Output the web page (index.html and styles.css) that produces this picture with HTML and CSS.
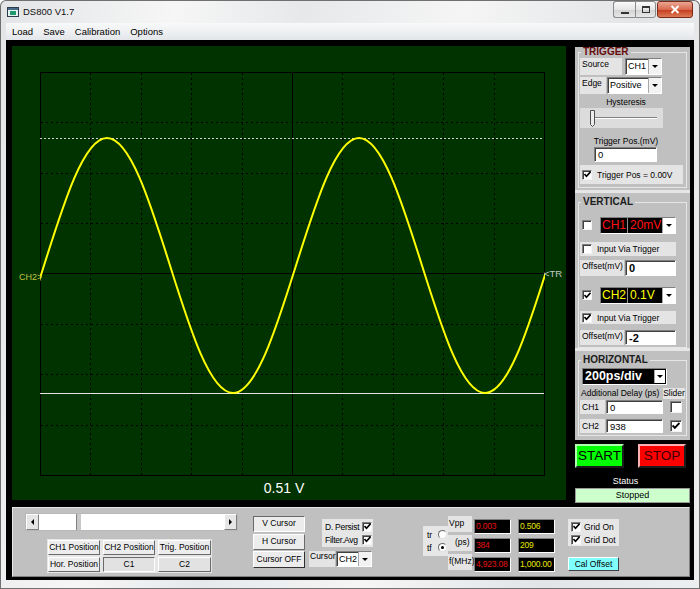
FILE: index.html
```html
<!DOCTYPE html>
<html>
<head>
    <title>DS800 V1.7</title>
    <link rel="stylesheet" href="styles.css">
</head>
<body>
    <div class="window">
        <div class="titlebar">
            <svg class="app-icon" width="12" height="12" viewBox="0 0 12 12">
                <rect x="0.5" y="1.5" width="11" height="9" fill="#e6f2f2" stroke="#2d3d4d"/>
                <rect x="1" y="2" width="10" height="2" fill="#4a6a8a"/>
                <rect x="3" y="5" width="6" height="4" fill="#1f9a6a"/>
            </svg>
            <span class="title">DS800 V1.7</span>
            <div class="caption-buttons">
                <div class="cbtn cbtn-min"><span class="min-bar"></span></div>
                <div class="cbtn cbtn-max"><span class="max-box"></span></div>
                <div class="cbtn cbtn-close">
                    <svg width="10" height="9" viewBox="0 0 10 9"><path d="M1.5 1 L8.5 8 M8.5 1 L1.5 8" stroke="#fff" stroke-width="2"/></svg>
                </div>
            </div>
        </div>

        <div class="menubar">
            <span>Load</span>
            <span>Save</span>
            <span>Calibration</span>
            <span>Options</span>
        </div>

        <div class="client">
            <div class="main">
                <div class="scope">
                    <svg width="554" height="454" viewBox="0 0 554 454">
                        <defs>
                            <clipPath id="plot"><rect x="28" y="0" width="505" height="454"/></clipPath>
                        </defs>
                        <rect width="554" height="454" fill="#003300"/>
                        <g stroke="#000" fill="none">
                            <rect x="28.5" y="26.5" width="504" height="403"/>
                            <line x1="280.5" y1="26" x2="280.5" y2="430"/>
                            <line x1="28" y1="227.5" x2="532" y2="227.5"/>
                        </g>
                        <g stroke="#000" stroke-dasharray="2 3" fill="none">
                            <line x1="78.5" y1="27" x2="78.5" y2="429"/>
                            <line x1="129.5" y1="27" x2="129.5" y2="429"/>
                            <line x1="179.5" y1="27" x2="179.5" y2="429"/>
                            <line x1="230.5" y1="27" x2="230.5" y2="429"/>
                            <line x1="330.5" y1="27" x2="330.5" y2="429"/>
                            <line x1="381.5" y1="27" x2="381.5" y2="429"/>
                            <line x1="431.5" y1="27" x2="431.5" y2="429"/>
                            <line x1="482.5" y1="27" x2="482.5" y2="429"/>
                            <line x1="29" y1="76.5" x2="532" y2="76.5"/>
                            <line x1="29" y1="127.5" x2="532" y2="127.5"/>
                            <line x1="29" y1="177.5" x2="532" y2="177.5"/>
                            <line x1="29" y1="278.5" x2="532" y2="278.5"/>
                            <line x1="29" y1="328.5" x2="532" y2="328.5"/>
                            <line x1="29" y1="379.5" x2="532" y2="379.5"/>
                        </g>
                        <line x1="28" y1="92.5" x2="532" y2="92.5" stroke="#d0d0d0" stroke-dasharray="2 2"/>
                        <line x1="28" y1="347.5" x2="532" y2="347.5" stroke="#e4e4e4"/>
                        <path clip-path="url(#plot)" fill="none" stroke="#ffff00" stroke-width="2"
                              d="M-31 347 C14.9 347 49.1 92 95 92 C140.9 92 175.1 347 221 347 C266.9 347 301.1 92 347 92 C392.9 92 427.1 347 473 347 C518.9 347 553.1 92 599 92"/>
                        <text class="mark-ch2" x="7" y="234">CH2&gt;</text>
                        <text class="mark-tr" x="532" y="231">&lt;TR</text>
                        <text class="readout" x="272" y="447" text-anchor="middle">0.51 V</text>
                    </svg>
                </div>

                <div class="side">
                    <div class="frame frame-trigger">
                        <fieldset class="group">
                            <legend class="legend-trigger">TRIGGER</legend>
                            <div class="row source-row">
                                <div class="lbl source-lbl">Source</div>
                                <div class="combo source-combo"><span class="combo-text">CH1</span><span class="drop"><i></i></span></div>
                            </div>
                            <div class="row edge-row">
                                <div class="lbl edge-lbl">Edge</div>
                                <div class="combo edge-combo"><span class="combo-text">Positive</span><span class="drop"><i></i></span></div>
                            </div>
                            <div class="caption hyst-caption">Hysteresis</div>
                            <div class="slider">
                                <svg width="83" height="20" viewBox="0 0 83 20">
                                    <line x1="10" y1="9.5" x2="77" y2="9.5" stroke="#808080"/>
                                    <line x1="10" y1="10.5" x2="77" y2="10.5" stroke="#fff"/>
                                    <path d="M10.5 2.5 V16.5 L12.5 18.5 L14.5 16.5 V2.5 Z" fill="#ececec" stroke="#505050"/>
                                </svg>
                            </div>
                            <div class="caption tpos-caption">Trigger Pos.(mV)</div>
                            <div class="input tpos-input">0</div>
                            <div class="row check-row tpos-check">
                                <span class="chk"><svg width="7" height="7" viewBox="0 0 7 7"><path d="M0.5 3 L2.5 5.2 L6.5 0.8" stroke="#000" stroke-width="1.6" fill="none"/></svg></span>
                                <span class="check-text">Trigger Pos = 0.00V</span>
                            </div>
                        </fieldset>
                    </div>

                    <div class="frame frame-vertical">
                        <fieldset class="group">
                            <legend>VERTICAL</legend>
                            <div class="row ch-row first">
                                <span class="chk ch-chk"></span>
                                <div class="chbox ch1">
                                    <span class="ch-name">CH1</span>
                                    <span class="ch-val">20mV</span>
                                    <span class="drop"><i></i></span>
                                </div>
                            </div>
                            <div class="row check-row ivt-row">
                                <span class="chk"></span>
                                <span class="check-text">Input Via Trigger</span>
                            </div>
                            <div class="row offset-row">
                                <div class="lbl offset-lbl">Offset(mV)</div>
                                <div class="input offset-input">0</div>
                            </div>
                            <div class="row ch-row second">
                                <span class="chk ch-chk"><svg width="7" height="7" viewBox="0 0 7 7"><path d="M0.5 3 L2.5 5.2 L6.5 0.8" stroke="#000" stroke-width="1.6" fill="none"/></svg></span>
                                <div class="chbox ch2">
                                    <span class="ch-name">CH2</span>
                                    <span class="ch-val">0.1V</span>
                                    <span class="drop"><i></i></span>
                                </div>
                            </div>
                            <div class="row check-row ivt-row ivt2">
                                <span class="chk"><svg width="7" height="7" viewBox="0 0 7 7"><path d="M0.5 3 L2.5 5.2 L6.5 0.8" stroke="#000" stroke-width="1.6" fill="none"/></svg></span>
                                <span class="check-text">Input Via Trigger</span>
                            </div>
                            <div class="row offset-row offset2">
                                <div class="lbl offset-lbl">Offset(mV)</div>
                                <div class="input offset-input">-2</div>
                            </div>
                        </fieldset>
                    </div>

                    <div class="frame frame-horizontal">
                        <fieldset class="group">
                            <legend>HORIZONTAL</legend>
                            <div class="timebase">
                                <span class="timebase-text">200ps/div</span>
                                <span class="drop"><i></i></span>
                            </div>
                            <div class="row delay-row">
                                <span class="delay-text">Additional Delay (ps)</span>
                                <span class="lbl slider-lbl">Slider</span>
                            </div>
                            <div class="row hdelay-row">
                                <div class="lbl hch-lbl">CH1</div>
                                <div class="input hdelay-input">0</div>
                                <span class="chk big-chk"></span>
                            </div>
                            <div class="row hdelay-row second">
                                <div class="lbl hch-lbl">CH2</div>
                                <div class="input hdelay-input">938</div>
                                <span class="chk big-chk"><svg width="8" height="8" viewBox="0 0 7 7"><path d="M0.5 3 L2.5 5.2 L6.5 0.8" stroke="#000" stroke-width="1.6" fill="none"/></svg></span>
                            </div>
                        </fieldset>
                    </div>

                    <div class="run-row">
                        <div class="run-btn start">START</div>
                        <div class="run-btn stop">STOP</div>
                    </div>
                    <div class="status-title">Status</div>
                    <div class="status-box">Stopped</div>
                </div>
            </div>

            <div class="bottom">
                <div class="col-scroll">
                    <div class="scrollbar">
                        <div class="sb-arrow"><i class="tri-left"></i></div>
                        <div class="sb-track"><div class="sb-thumb"></div></div>
                        <div class="sb-arrow"><i class="tri-right"></i></div>
                    </div>
                    <div class="pos-grid">
                        <div class="btn">CH1 Position</div>
                        <div class="btn">CH2 Position</div>
                        <div class="btn">Trig. Position</div>
                        <div class="btn">Hor. Position</div>
                        <div class="btn btn-down btn-c">C1</div>
                        <div class="btn btn-c">C2</div>
                    </div>
                </div>

                <div class="col-cursor">
                    <div class="btn btn-down cur-v">V Cursor</div>
                    <div class="btn cur-h">H Cursor</div>
                    <div class="btn cur-off">Cursor OFF</div>
                </div>

                <div class="col-filter">
                    <div class="filter-box">
                        <div class="filter-row">
                            <span>D. Persist</span>
                            <span class="chk"><svg width="7" height="7" viewBox="0 0 7 7"><path d="M0.5 3 L2.5 5.2 L6.5 0.8" stroke="#000" stroke-width="1.6" fill="none"/></svg></span>
                        </div>
                        <div class="filter-row">
                            <span>Filter.Avg</span>
                            <span class="chk"><svg width="7" height="7" viewBox="0 0 7 7"><path d="M0.5 3 L2.5 5.2 L6.5 0.8" stroke="#000" stroke-width="1.6" fill="none"/></svg></span>
                        </div>
                    </div>
                    <div class="row cursor-row">
                        <div class="lbl cursor-lbl">Cursor</div>
                        <div class="combo cursor-combo"><span class="combo-text">CH2</span><span class="drop"><i></i></span></div>
                    </div>
                </div>

                <div class="col-measure">
                    <div class="edge-box">
                        <div class="edge-opt"><span>tr</span><span class="radio"></span></div>
                        <div class="edge-opt"><span>tf</span><span class="radio on"><i></i></span></div>
                    </div>
                    <div class="meas-labels">
                        <div class="lbl meas-lbl">Vpp</div>
                        <div class="lbl meas-lbl ps-lbl">(ps)</div>
                        <div class="lbl meas-lbl">f(MHz)</div>
                    </div>
                    <div class="meas-values red">
                        <div class="value">0.003</div>
                        <div class="value">384</div>
                        <div class="value">4,923.08</div>
                    </div>
                    <div class="meas-values yellow">
                        <div class="value">0.506</div>
                        <div class="value">209</div>
                        <div class="value">1,000.00</div>
                    </div>
                </div>

                <div class="col-grid">
                    <div class="grid-box">
                        <div class="grid-opt">
                            <span class="chk"><svg width="7" height="7" viewBox="0 0 7 7"><path d="M0.5 3 L2.5 5.2 L6.5 0.8" stroke="#000" stroke-width="1.6" fill="none"/></svg></span>
                            <span>Grid On</span>
                        </div>
                        <div class="grid-opt">
                            <span class="chk"><svg width="7" height="7" viewBox="0 0 7 7"><path d="M0.5 3 L2.5 5.2 L6.5 0.8" stroke="#000" stroke-width="1.6" fill="none"/></svg></span>
                            <span>Grid Dot</span>
                        </div>
                    </div>
                    <div class="cal-btn">Cal Offset</div>
                </div>
            </div>
        </div>
    </div>
</body>
</html>
```

FILE: styles.css
```css
* {
    box-sizing: border-box;
}

body {
    margin: 0;
    font-family: "Liberation Sans", Arial, sans-serif;
    font-size: 8.5px;
    color: #000;
    background: #fff;
}

/* window chrome */

.window {
    width: 700px;
    height: 589px;
    padding: 0 6px 9px;
    display: flex;
    flex-direction: column;
    border-radius: 6px 6px 0 0;
    background: linear-gradient(100deg, #e2e4e6 0%, #f6f6f6 22%, #e6e8ea 38%, #f5f5f5 58%, #e2e4e6 80%, #eceef0 100%);
    box-shadow: inset 0 0 0 1px #707070;
}

.titlebar {
    height: 23px;
    flex-shrink: 0;
    display: flex;
    align-items: center;
}

.app-icon {
    margin-left: 1px;
}

.title {
    margin-left: 4px;
    font-size: 9.5px;
    color: #111;
}

.caption-buttons {
    margin-left: auto;
    margin-right: 1px;
    margin-top: 1px;
    align-self: flex-start;
    display: flex;
}

.cbtn {
    height: 17px;
    display: flex;
    align-items: center;
    justify-content: center;
    border: 1px solid #8a8a8a;
    background: linear-gradient(#fafafa, #e6e6e6 50%, #d2d2d2 51%, #e8e8e8);
}

.cbtn-min {
    width: 22px;
    border-right: none;
    border-radius: 3px 0 0 3px;
}

.cbtn-max {
    width: 21px;
    border-radius: 0 3px 3px 0;
}

.cbtn-close {
    width: 36px;
    margin-left: 1px;
    border-radius: 3px;
    border-color: #7c2a18;
    background: linear-gradient(#eba693, #d9694e 50%, #c33a1c 51%, #dc7a56);
}

.min-bar {
    width: 8px;
    height: 2px;
    margin-top: 6px;
    background: #333;
}

.max-box {
    width: 8px;
    height: 7px;
    border: 1px solid #333;
    border-top-width: 2px;
}

.menubar {
    height: 17px;
    flex-shrink: 0;
    display: flex;
    align-items: center;
    padding-left: 1px;
    font-size: 9.5px;
    background: linear-gradient(#f8f9fa, #eceef1 60%, #e2e5e9);
}

.menubar span {
    padding: 0 5px;
}

.client {
    flex: 1;
    background: #000;
    padding: 6px 4px 3px 6px;
}

.main {
    display: flex;
    align-items: flex-start;
    gap: 9px;
}

/* scope */

.scope {
    width: 554px;
    height: 454px;
}

.scope svg {
    display: block;
}

.mark-ch2 {
    font-size: 9px;
    fill: #c4c444;
}

.mark-tr {
    font-size: 9.5px;
    fill: #c8c8c8;
}

.readout {
    font-size: 14px;
    fill: #fff;
}

/* side panel */

.side {
    width: 115px;
    margin-top: 1px;
}

.frame {
    display: flex;
    flex-direction: column;
    background: #c0c0c0;
    padding: 0 3px 2px;
}

.frame-trigger {
    height: 143px;
}

.frame-vertical {
    height: 158px;
    padding-top: 4px;
    border-top: 3px solid #e6e6e6;
}

.frame-horizontal {
    height: 92px;
    padding-top: 4px;
    padding-bottom: 4px;
    border-top: 3px solid #e6e6e6;
}

.group {
    flex: 1;
    min-width: 0;
    margin: 0;
    padding: 0 1px 2px;
    border: 1px solid #e6e6e6;
}

.group legend {
    margin-left: 1px;
    padding: 0 2px;
    font-size: 10px;
    line-height: 10px;
    font-weight: bold;
    color: #1c1c1c;
}

.group .legend-trigger {
    color: #680c0c;
}

.row {
    display: flex;
    align-items: center;
}

.lbl {
    align-self: stretch;
    padding: 1px 2px;
    line-height: 11px;
    background: #e4e4e4;
    white-space: nowrap;
}

.combo {
    display: flex;
    height: 100%;
    background: #fff;
    border: 1px solid;
    border-color: #808080 #fff #fff #808080;
    box-shadow: inset 1px 1px 0 #404040;
}

.combo-text {
    flex: 1;
    padding: 2px 0 0 2px;
    line-height: 11px;
    font-size: 9px;
}

.drop {
    width: 13px;
    display: flex;
    align-items: center;
    justify-content: center;
    background: #f2f2f2;
    border-left: 1px solid #a8a8a8;
}

.drop i {
    width: 0;
    height: 0;
    border-left: 3px solid transparent;
    border-right: 3px solid transparent;
    border-top: 3px solid #000;
}

.input {
    height: 15px;
    padding: 1px 0 0 3px;
    line-height: 12px;
    font-size: 9.5px;
    background: #fff;
    border: 1px solid;
    border-color: #808080 #fff #fff #808080;
    box-shadow: inset 1px 1px 0 #404040;
}

.chk {
    width: 10px;
    height: 10px;
    flex-shrink: 0;
    display: flex;
    align-items: center;
    justify-content: center;
    background: #fff;
    border: 1px solid;
    border-color: #808080 #f4f4f4 #f4f4f4 #808080;
    box-shadow: inset 1px 1px 0 #404040;
}

.caption {
    height: 10px;
    width: 92px;
    line-height: 10px;
    text-align: center;
}

/* trigger */

.source-row {
    height: 17px;
    margin-top: 1px;
}

.source-lbl {
    width: 42px;
}

.source-combo {
    width: 37px;
    margin-left: 3px;
}

.edge-row {
    height: 17px;
    margin-top: 2px;
}

.edge-lbl {
    width: 26px;
}

.edge-combo {
    width: 55px;
    margin-left: 1px;
}

.hyst-caption {
    margin-top: 3px;
}

.slider {
    width: 83px;
    height: 20px;
    margin-top: 1px;
    background: #dcdcdc;
}

.slider svg {
    display: block;
}

.tpos-caption {
    margin-top: 8px;
}

.tpos-input {
    width: 63px;
    margin: 1px 0 0 14px;
}

.check-row {
    background: #e4e4e4;
    padding-left: 2px;
}

.check-text {
    margin-left: 5px;
    white-space: nowrap;
}

.tpos-check {
    width: 103px;
    height: 19px;
    margin-top: 3px;
}

/* vertical */

.ch-row {
    height: 18px;
}

.ch-row.first {
    margin-top: 9px;
}

.ch-row.second {
    margin-top: 10px;
}

.ch-chk {
    margin-left: 2px;
}

.chbox {
    width: 76px;
    height: 17px;
    margin-left: 8px;
    display: flex;
    background: #000;
    border: 1px solid;
    border-color: #808080 #fff #fff #808080;
    font-size: 12px;
    line-height: 15px;
}

.ch-name {
    width: 27px;
    padding-left: 1px;
    border-right: 1px solid #909090;
}

.ch-val {
    flex: 1;
    padding-left: 2px;
}

.ch1 {
    color: #ff1010;
}

.ch2 {
    color: #ffff00;
}

.chbox .drop {
    background: #fff;
}

.ivt-row {
    width: 96px;
    height: 14px;
    margin-top: 8px;
}

.ivt-row.ivt2 {
    height: 13px;
    margin-top: 7px;
}

.offset-row {
    height: 16px;
    margin-top: 4px;
}

.offset-row.offset2 {
    height: 15px;
    margin-top: 6px;
}

.offset-lbl {
    width: 44px;
}

.offset-input {
    width: 51px;
    height: 100%;
    margin-left: 1px;
    font-size: 11px;
    font-weight: bold;
}

/* horizontal */

.timebase {
    width: 85px;
    height: 17px;
    margin: 3px 0 0 2px;
    display: flex;
    background: #000;
    border: 1px solid;
    border-color: #808080 #fff #fff #808080;
}

.timebase-text {
    flex: 1;
    padding-left: 2px;
    color: #fff;
    font-size: 12.5px;
    font-weight: bold;
    line-height: 15px;
}

.timebase .drop {
    width: 11px;
    margin: 1px 1px 1px 0;
    background: #fff;
}

.delay-row {
    height: 11px;
    margin-top: 3px;
}

.delay-text {
    width: 83px;
    padding-left: 1px;
    line-height: 11px;
    white-space: nowrap;
}

.slider-lbl {
    width: 22px;
    padding: 0;
    line-height: 11px;
    text-align: center;
}

.hdelay-row {
    height: 14px;
    margin-top: 1px;
}

.hdelay-row.second {
    margin-top: 5px;
}

.hch-lbl {
    width: 25px;
    padding-top: 2px;
}

.hdelay-input {
    width: 57px;
    height: 100%;
    margin-left: 1px;
}

.big-chk {
    width: 12px;
    height: 12px;
    margin-left: 7px;
}

/* run / status */

.run-row {
    display: flex;
    justify-content: space-between;
    margin-top: 4px;
    padding-right: 4px;
}

.run-btn {
    height: 24px;
    font-size: 13.5px;
    line-height: 20px;
    text-align: center;
    border: 2px solid;
}

.start {
    width: 49px;
    background: #00ff00;
    color: #000;
    border-color: #b0ffb0 #1c1c1c #1c1c1c #b0ffb0;
}

.stop {
    width: 48px;
    background: #ff0000;
    color: #3a0000;
    border-color: #ffb0b0 #1c1c1c #1c1c1c #ffb0b0;
}

.status-title {
    margin-top: 8px;
    padding-right: 14px;
    line-height: 10px;
    text-align: center;
    color: #fff;
    font-size: 9px;
}

.status-box {
    height: 15px;
    margin-top: 2px;
    text-align: center;
    line-height: 13px;
    font-size: 9px;
    background: #ccffcc;
    border: 1px solid #9a9a9a;
}

/* bottom panel */

.bottom {
    height: 70px;
    margin-top: 4px;
    display: flex;
    align-items: flex-start;
    padding: 5px 0 0 12px;
    background: #c0c0c0;
    border: 1px solid;
    border-color: #e6e6e6 #808080 #808080 #e6e6e6;
}

.col-scroll {
    width: 213px;
}

.scrollbar {
    height: 18px;
    display: flex;
    background: #fff;
    border: 1px solid #b8b8b8;
}

.sb-arrow {
    width: 13px;
    display: flex;
    align-items: center;
    justify-content: center;
    background: #e6e6e6;
    border: 1px solid;
    border-color: #fff #808080 #808080 #fff;
}

.tri-left {
    border-top: 3px solid transparent;
    border-bottom: 3px solid transparent;
    border-right: 3px solid #000;
}

.tri-right {
    border-top: 3px solid transparent;
    border-bottom: 3px solid transparent;
    border-left: 3px solid #000;
}

.sb-track {
    flex: 1;
}

.sb-thumb {
    width: 42px;
    height: 100%;
    background: #fff;
    border-right: 4px solid #c8c8c8;
    box-shadow: inset -1px 0 0 #808080;
}

.pos-grid {
    width: 165px;
    height: 34px;
    margin: 8px 0 0 22px;
    padding: 1px;
    display: grid;
    grid-template-columns: 52px 52px 53px;
    grid-template-rows: 15px 15px;
    column-gap: 3px;
    row-gap: 2px;
    background: #e6e6e6;
}

.btn {
    text-align: center;
    line-height: 13px;
    white-space: nowrap;
    background: #ececec;
    border: 1px solid;
    border-color: #fff #6a6a6a #6a6a6a #fff;
}

.btn-down {
    border-color: #6a6a6a #fff #fff #6a6a6a;
}

.btn-c {
    background: #e2e2e2;
}

.col-cursor {
    width: 52px;
    margin: 3px 0 0 15px;
    display: flex;
    flex-direction: column;
}

.cur-v {
    height: 16px;
}

.cur-h {
    height: 16px;
    margin-top: 2px;
}

.cur-off {
    height: 17px;
    margin-top: 1px;
    line-height: 15px;
    border-color: #fff #303030 #303030 #fff;
}

.col-filter {
    width: 64px;
    margin-left: 4px;
}

.filter-box {
    width: 51px;
    height: 28px;
    margin: 6px 0 0 13px;
    padding: 1px 1px 0 3px;
    background: #e6e6e6;
}

.filter-row {
    height: 13px;
    display: flex;
    align-items: center;
    justify-content: space-between;
    white-space: nowrap;
    letter-spacing: -0.25px;
}

.cursor-row {
    height: 16px;
    margin-top: 4px;
}

.cursor-lbl {
    width: 26px;
    padding: 0 1px;
}

.cursor-combo {
    width: 36px;
    margin-left: 1px;
}

.col-measure {
    display: flex;
    align-items: flex-start;
    margin-left: 50px;
}

.edge-box {
    width: 25px;
    height: 30px;
    margin-top: 13px;
    padding: 2px 1px 0 4px;
    background: #e6e6e6;
}

.edge-opt {
    height: 13px;
    display: flex;
    align-items: center;
    justify-content: space-between;
}

.radio {
    width: 9px;
    height: 9px;
    display: flex;
    align-items: center;
    justify-content: center;
    border-radius: 50%;
    background: #fff;
    border: 1px solid;
    border-color: #6a6a6a #e0e0e0 #e0e0e0 #6a6a6a;
}

.radio.on i {
    width: 3px;
    height: 3px;
    border-radius: 50%;
    background: #000;
}

.meas-labels {
    width: 24px;
    margin-top: 3px;
    display: flex;
    flex-direction: column;
    gap: 3px;
}

.meas-lbl {
    height: 16px;
    padding: 2px 0 0 1px;
}

.ps-lbl {
    padding-left: 7px;
}

.meas-values {
    width: 37px;
    margin: 6px 0 0 2px;
    display: flex;
    flex-direction: column;
    gap: 4px;
}

.meas-values.yellow {
    margin-left: 7px;
}

.value {
    height: 15px;
    padding-left: 1px;
    line-height: 13px;
    font-size: 8.5px;
    letter-spacing: -0.2px;
    white-space: nowrap;
    overflow: hidden;
    background: #000;
    border: 1px solid;
    border-color: #808080 #fff #fff #808080;
}

.red .value {
    color: #e81010;
}

.yellow .value {
    color: #e6e600;
}

.col-grid {
    width: 51px;
    margin-left: 13px;
}

.grid-box {
    height: 27px;
    margin-top: 6px;
    padding: 1px 0 0 3px;
    background: #e6e6e6;
}

.grid-opt {
    height: 13px;
    display: flex;
    align-items: center;
    gap: 3px;
}

.cal-btn {
    height: 14px;
    margin-top: 11px;
    text-align: center;
    line-height: 12px;
    background: #80ffff;
    border: 1px solid;
    border-color: #fff #404040 #404040 #fff;
}
```
